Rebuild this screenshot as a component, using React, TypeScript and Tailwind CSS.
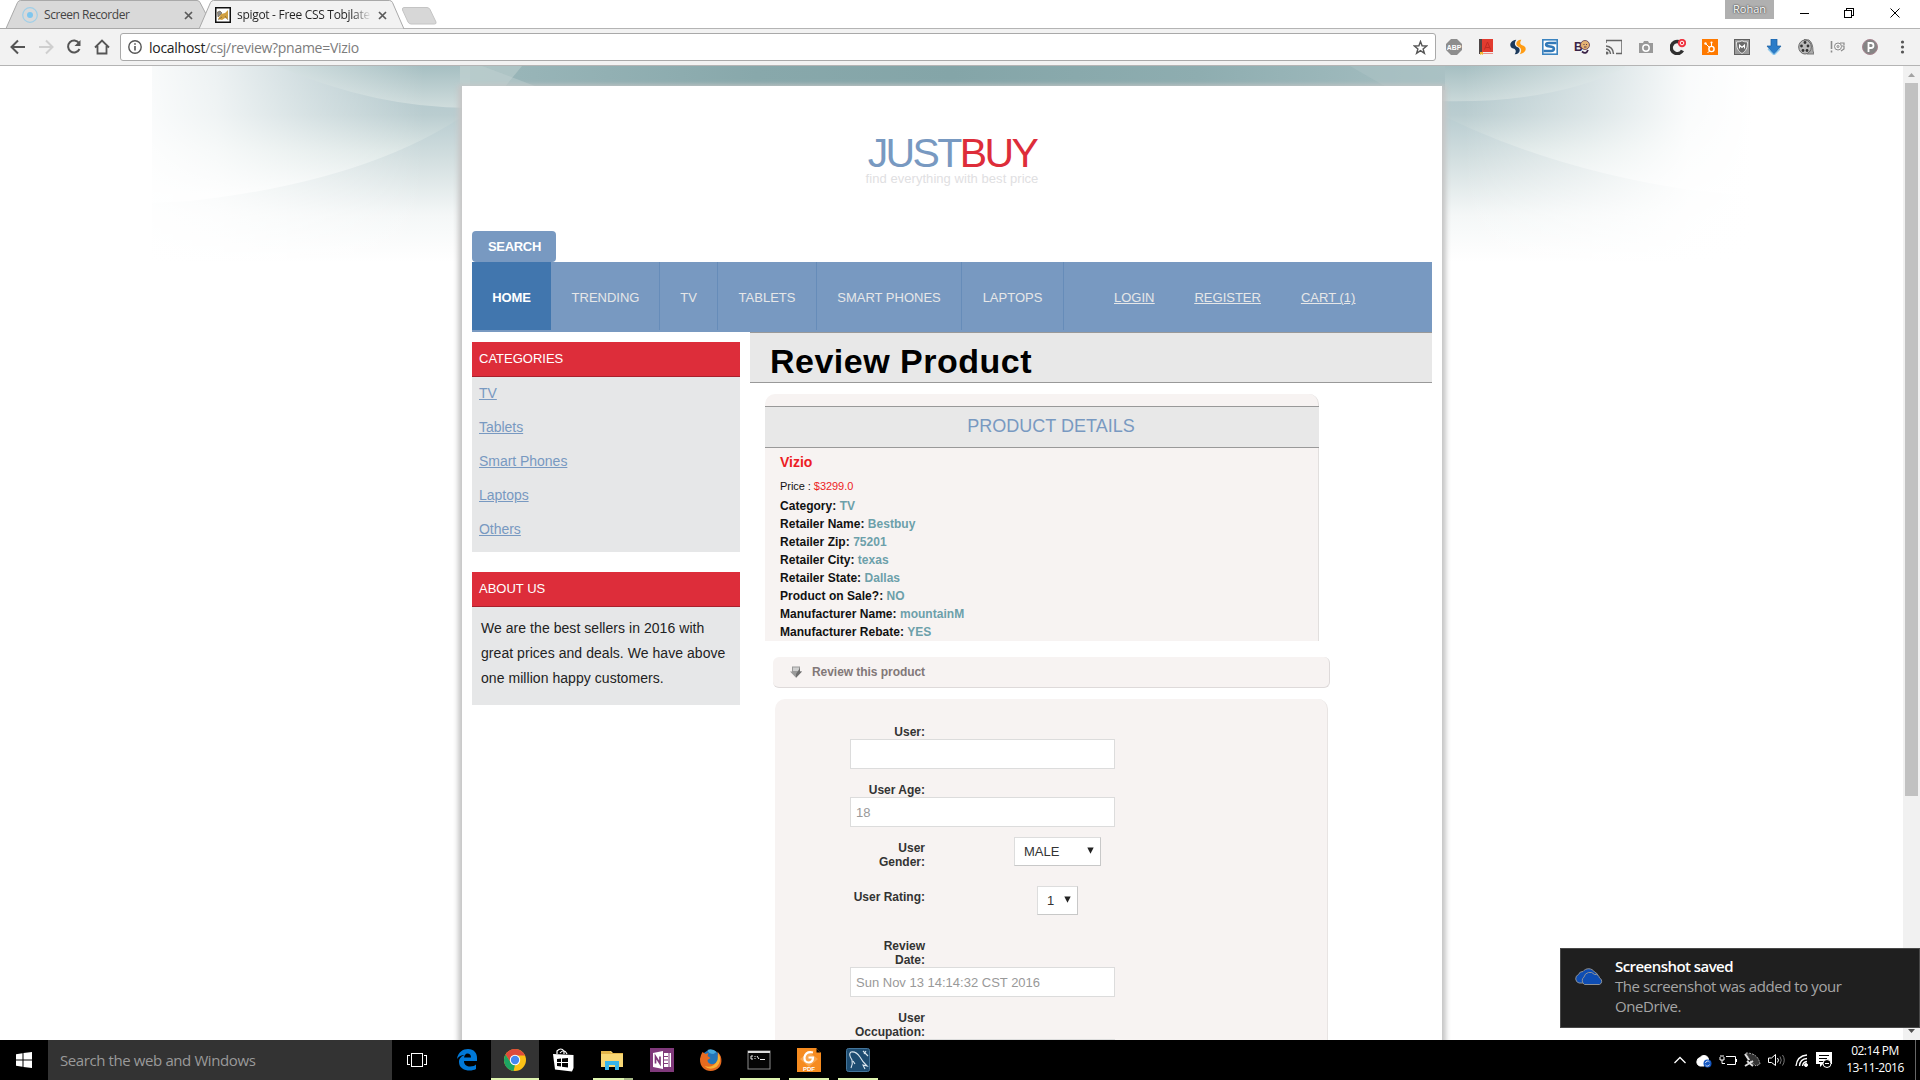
import React from "react";

const sans = "font-['Liberation_Sans',sans-serif]";
const ui = "font-['Open_Sans',sans-serif]";

function Tabs() {
  return (
    <div className={`relative flex h-7 w-full bg-white text-[12px] ${ui}`}>
      <svg className="absolute left-0 top-0" width="440" height="29" viewBox="0 0 440 29">
        <path d="M0 28.5H6L17.5 2.5Q18.5.5 20.500.5H197Q199 .5 200 2.500L206 14 200 28.500Z" fill="#d9d9d9" stroke="#a9a9a9" />
        <path d="M199 29L210.500 2.500Q211.500.5 213.500.5H389.500Q391.500.5 392.500 2.500L404 29Z" fill="#f2f2f2" stroke="#a9a9a9" />
        <path d="M404 7.500H427Q429 7.500 430 9.500L436 22Q436.500 24 434.500 24H411Q409 24 408 22L402.500 10Q402 7.500 404 7.500Z" fill="#d7d7d7" stroke="#c4c4c4" />
      </svg>
      <div className="relative flex h-7 w-[206px] items-center pl-[22px] pt-[2px]">
        <svg width="16" height="16" viewBox="0 0 16 16"><circle cx="8" cy="8" r="7.300" fill="none" stroke="#9fcfe8" strokeWidth="1.200" /><circle cx="8" cy="8" r="3" fill="#7fc6ee" /></svg>
        <span className="ml-[6px] w-[140px] tracking-[-0.45px] text-[#444]">Screen Recorder</span>
        <CloseX />
      </div>
      <div className="relative flex h-7 w-[200px] items-center pl-[9px] pt-[2px]">
        <svg width="16" height="16" viewBox="0 0 16 16">
          <rect x=".75" y=".75" width="14.500" height="14.500" fill="#fff" stroke="#111" strokeWidth="1.500" />
          <path d="M3 12L6 7 10 6 13 3V12L10 11 7 13Z" fill="#d1a041" /><path d="M2.500 5L5 4 7 6 5 8 3 10ZM10 9L13 13M3 13L7 10" fill="#8a8a8a" stroke="#6b5a3a" strokeWidth=".6" />
        </svg>
        <span className="ml-[6px] w-[134px] overflow-hidden whitespace-nowrap bg-gradient-to-r from-[#222] from-85% to-[#f2f2f2] bg-clip-text tracking-[-0.3px] text-transparent">spigot - Free CSS Tobjlate</span>
        <span className="ml-[7px] flex"><CloseX /></span>
      </div>
      <div className="flex-1" />
      <div className="mr-[26px] flex h-[19px] w-[49px] items-center justify-center bg-[#b0b0b0] text-[11px] text-white [text-shadow:0_0_2px_#333,0_0_1px_#555]">Rohan</div>
      <svg width="120" height="26" viewBox="0 0 120 26" fill="none" stroke="#000" shapeRendering="crispEdges">
        <path d="M0 13.500H9M44.500 10.500H51.500V17.500H44.500ZM46.500 10.500V8.500H53.500V15.500H51.500" />
        <path d="M90.500 8.500L99.500 17.500M99.500 8.500L90.500 17.500" shapeRendering="auto" />
      </svg>
    </div>
  );
}

function CloseX() {
  return <svg width="9" height="9" viewBox="0 0 9 9" stroke="#5a5a5a" strokeWidth="1.700"><path d="M1 1L8 8M8 1L1 8" /></svg>;
}

const extensions: React.ReactNode[] = [
  <g><path d="M5 0H11L16 5V11L11 16H5L0 11V5Z" fill="#8d8d8d" /><text x="8" y="10.800" textAnchor="middle" fontSize="6.800" fontWeight="bold" fill="#fff" fontFamily="Liberation Sans">ABP</text></g>,
  <g><rect x="1" y="0" width="14" height="15" fill="#e23b2f" /><rect x="1" width="3" height="15" fill="#4d4545" /><rect x="2" y="13" width="13" height="1.500" fill="#eee" /><path d="M2 13H5V16L3.500 15 2 16Z" fill="#f4b82e" /><path d="M6.500 10.500L9.500 3 12.500 10.500M7.500 8.500H11.500" fill="none" stroke="#c02a22" strokeWidth="1" /></g>,
  <g><path d="M7 .8C0 2 -.5 8 4 9.500C6.500 10 7.500 12 5.500 15.200C10.500 15.500 12.500 9.500 8 8C5.500 7 4.800 4 7 .8Z" fill="#1d3a5c" transform="translate(-.8 0)" /><path d="M9 15.200C16 14 16.500 8 12 6.500C9.500 6 8.500 4 10.500 .8C5.500 .5 3.500 6.500 8 8C10.500 9 11.200 12 9 15.200Z" fill="#ff9c14" transform="translate(.8 0)" /></g>,
  <g><rect x=".8" y=".8" width="14.400" height="14.400" fill="#fff" stroke="#3c84c0" strokeWidth="1.600" /><path d="M14.500 4H7C3 4 3.500 6.800 6.500 7.200L9.500 7.800C13 8.500 12.500 12 9 12H1.500" fill="none" stroke="#3279b8" strokeWidth="2.600" /></g>,
  <g><text x="0" y="12" fontSize="12" fontWeight="bold" fill="#3a2347" fontFamily="Liberation Sans">B</text><circle cx="11" cy="6" r="4.500" fill="#e5b272" stroke="#5a3550" strokeWidth=".8" /><path d="M9.500 5.500H10.500M12 5.500H13M10 8H12.500" stroke="#5a3550" /><path d="M8 12.500Q12 16 14 11" fill="none" stroke="#3a2347" strokeWidth="1.800" /></g>,
  <g fill="none" stroke="#666" strokeWidth="1.500"><path d="M0 4V1.500H16V14.500H10M0 7Q7 7.500 7.500 15M0 10Q4 10.500 4.500 15" /><circle cx="1" cy="14" r=".8" fill="#666" /></g>,
  <g><path d="M1 4H5L6 2H10L11 4H15V14H1Z" fill="#999" /><circle cx="8" cy="9" r="3.200" fill="none" stroke="#fff" strokeWidth="1.500" /></g>,
  <g><path d="M12.500 11.500A6 6 0 1 1 9 2.800" fill="none" stroke="#303030" strokeWidth="3.500" /><circle cx="12" cy="4" r="4.200" fill="#ef3340" /><circle cx="12" cy="4" r="1.800" fill="none" stroke="#fff" /></g>,
  <g><rect width="16" height="16" fill="#ff7a00" /><circle cx="9.500" cy="10" r="2.600" fill="none" stroke="#fff" strokeWidth="1.400" /><path d="M9.500 7.500V3.500M7.500 8.500L3.500 4.500M7.500 12L5.500 14" stroke="#fff" /><circle cx="3.500" cy="4.500" r="1.200" fill="#fff" /><circle cx="9.500" cy="3.500" r="1.100" fill="#fff" /></g>,
  <g><rect x=".5" y=".5" width="15" height="15" fill="#9a9a9a" stroke="#606060" /><path d="M2.500 3Q6 3 8 1.800 10 3 13.500 3C13.500 9 12 12 8 14.500 4 12 2.500 9 2.500 3Z" fill="#6b6b6b" stroke="#eee" strokeWidth=".9" /><path d="M5.500 9.500V6L8 8.500 10.500 6V9.500" fill="none" stroke="#fff" strokeWidth="1.100" /></g>,
  <g><path d="M5 0H11V7H15L8 15.500 1 7H5Z" fill="#2b7cc8" stroke="#185d9f" strokeWidth=".7" /><path d="M2 10L8 16 14 10" fill="none" stroke="#8bc8ee" strokeWidth="1.300" /></g>,
  <g><path d="M6 .5L11 1Q15 4 15 12L16 15H9" fill="#aaa" stroke="#777" /><ellipse cx="7" cy="8" rx="6.300" ry="7" fill="#bbb" stroke="#666" /><g fill="#333"><circle cx="7" cy="3.500" r="1.400" /><circle cx="3.500" cy="7" r="1.400" /><circle cx="10" cy="7" r="1.400" /><circle cx="5" cy="11.500" r="1.400" /><circle cx="9" cy="11.500" r="1.400" /></g></g>,
  <g fill="none" stroke="#8a8a8a"><path d="M1.500 2V10M1.500 11.500V13.500" strokeWidth="1.600" /><circle cx="8" cy="7.500" r="3.500" /><circle cx="8" cy="7.500" r="1" /><path d="M10 4H14V6M12 7H14V10L11 12" strokeWidth="1.200" /></g>,
  <g><circle cx="8" cy="8" r="7.500" fill="#858585" stroke="#a7848f" /><path d="M6.500 13V4H9Q11.500 4 11.500 6.500T9 9H6.500" fill="none" stroke="#fff" strokeWidth="1.800" /></g>,
];

function Toolbar() {
  return (
    <div className="flex h-[38px] w-full items-center border-y border-[#b4b4b4] bg-[#f2f2f2]">
      <svg className="relative" width="120" height="36" viewBox="0 0 120 36" fill="none" stroke="#555" strokeWidth="2">
        <path d="M25 18H12M18 11.500L11.500 18 18 24.500" />
        <path d="M39 18H52M46 11.500L52.500 18 46 24.500" stroke="#cfcfcf" />
        <path d="M79 14A6 6 0 1 0 79.500 20" />
        <path d="M80.500 11V17H74.500Z" fill="#555" stroke="none" />
        <path d="M95 18.500L102 11.500 109 18.500M97.500 17V24.500H106.500V17" strokeWidth="1.800" />
      </svg>
      <div className="flex h-7 w-[1316px] items-center rounded-[3px] border border-[#a9a9a9] bg-white pl-[7px] pr-[7px]">
        <svg width="14" height="14" viewBox="0 0 14 14" fill="none" stroke="#555" strokeWidth="1.400"><circle cx="7" cy="7" r="6.200" /><path d="M7 6V10.500M7 3.300V4.800" strokeWidth="1.600" /></svg>
        <span className={`ml-[7px] flex-1 text-[14px] tracking-[-0.28px] text-[#7c7c7c] ${ui}`}><span className="text-[#222]">localhost</span>/csj/review?pname=Vizio</span>
        <svg width="15" height="15" viewBox="0 0 15 15" fill="none" stroke="#555" strokeWidth="1.400"><path d="M7.500 1.500L9.100 5.800 13.700 6 10.100 8.900 11.400 13.300 7.500 10.700 3.600 13.300 4.900 8.900 1.300 6 5.900 5.800Z" /></svg>
      </div>
      <div className="ml-[2px] flex">
        {extensions.map((icon, i) => (
          <div key={i} className="flex w-8 justify-center"><svg width="16" height="16" viewBox="0 0 16 16">{icon}</svg></div>
        ))}
      </div>
      <svg className="ml-[14px]" width="5" height="14" viewBox="0 0 5 14" fill="#555"><circle cx="2.500" cy="2" r="1.600" /><circle cx="2.500" cy="7" r="1.600" /><circle cx="2.500" cy="12" r="1.600" /></svg>
    </div>
  );
}

function Waves() {
  return (
    <svg className="absolute left-[152px] top-0" width="1600" height="230" viewBox="152 66 1600 230">
      <defs>
        <linearGradient id="low" x1="0" y1="105" x2="0" y2="262" gradientUnits="userSpaceOnUse"><stop offset="0" stopColor="#b2c8cd" /><stop offset=".35" stopColor="#d3dfe0" /><stop offset=".7" stopColor="#f4f7f7" /><stop offset="1" stopColor="#fff" /></linearGradient>
        <linearGradient id="mid" x1="0" y1="66" x2="0" y2="195" gradientUnits="userSpaceOnUse"><stop offset="0" stopColor="#adc3c8" /><stop offset=".38" stopColor="#bacdd0" /><stop offset=".65" stopColor="#dae5e4" /><stop offset="1" stopColor="#f9fbfb" /></linearGradient>
        <linearGradient id="top" x1="0" y1="66" x2="0" y2="108" gradientUnits="userSpaceOnUse"><stop offset="0" stopColor="#a6bfc2" /><stop offset="1" stopColor="#d0dddd" /></linearGradient>
        <linearGradient id="band" x1="460" y1="0" x2="1445" y2="0" gradientUnits="userSpaceOnUse"><stop offset="0" stopColor="#9cb8bb" /><stop offset=".3" stopColor="#88a8ab" /><stop offset=".5" stopColor="#84a5a8" /><stop offset=".75" stopColor="#8eadb0" /><stop offset="1" stopColor="#a6bfc2" /></linearGradient>
        <linearGradient id="fade" x1="152" y1="0" x2="1752" y2="0" gradientUnits="userSpaceOnUse">
          <stop offset="0" stopColor="#fff" stopOpacity=".92" /><stop offset=".04" stopColor="#fff" stopOpacity=".78" /><stop offset=".1" stopColor="#fff" stopOpacity=".4" /><stop offset=".17" stopColor="#fff" stopOpacity="0" />
          <stop offset=".82" stopColor="#fff" stopOpacity="0" /><stop offset=".9" stopColor="#fff" stopOpacity=".5" /><stop offset=".96" stopColor="#fff" stopOpacity=".93" /><stop offset="1" stopColor="#fff" />
        </linearGradient>
      </defs>
      <rect x="152" y="66" width="1600" height="230" fill="url(#low)" />
      <path d="M152 66H480V104Q380 180 190 201L152 203Z" fill="url(#mid)" />
      <path d="M1752 66H1420V104Q1540 168 1690 190L1752 196Z" fill="url(#mid)" />
      <path d="M277 66Q375 108 470 108V66Z" fill="url(#top)" />
      <path d="M1625 68Q1550 104 1440 101V66H1625Z" fill="url(#top)" />
      <path d="M470 66H1445V90H470Z" fill="url(#band)" />
      <path d="M460 66H522L504 88H460Z" fill="#b7cacb" opacity=".7" />
      <path d="M482 66L540 88H460V66Z" fill="#c3d2d2" opacity=".45" />
      <path d="M1350 66H1445V88H1388Z" fill="#adc3c6" opacity=".5" />
      <rect x="152" y="66" width="1600" height="230" fill="url(#fade)" />
    </svg>
  );
}

function Nav() {
  const items = [["TRENDING", "w-[109px] pl-px"], ["TV", "w-[58px]"], ["TABLETS", "w-[99px]"], ["SMART PHONES", "w-[145px]"], ["LAPTOPS", "w-[102px]"]];
  return (
    <nav className="flex h-[70px] bg-[#7899c1] text-[13px] text-[#e6e7e8]">
      <a className="flex h-[68px] w-[79px] items-center justify-center bg-[#4176ae] pt-[4px] font-bold tracking-[-0.1px] text-white">HOME</a>
      {items.map(([t, w]) => (
        <a key={t} className={`flex h-[68px] items-center justify-center border-r border-[#668cb9] pt-[4px] whitespace-nowrap ${w}`}>{t}</a>
      ))}
      <div className="ml-[50px] flex h-[68px] items-center gap-10 pt-[4px] underline">
        <a>LOGIN</a><a>REGISTER</a><a>CART (1)</a>
      </div>
    </nav>
  );
}

function Sidebar() {
  return (
    <aside className="w-[268px] pt-[10px]">
      <h2 className="h-[35px] border-b border-[#a8202c] bg-[#dd2d3a] pl-[7px] text-[13px] leading-[33px] text-white">CATEGORIES</h2>
      <ul className="bg-[#e6e7e8] pb-[6px] pl-[7px] text-[14px] leading-[34px] tracking-[-0.03px] text-[#7899c1] underline">
        {["TV", "Tablets", "Smart Phones", "Laptops", "Others"].map((c, i) => <li key={c} className={i === 0 ? "h-[33px] leading-[32px]" : "h-[34px]"}>{c}</li>)}
      </ul>
      <h2 className="mt-5 h-[35px] border-b border-[#a8202c] bg-[#dd2d3a] pl-[7px] text-[13px] leading-[33px] text-white">ABOUT US</h2>
      <p className="h-[98px] bg-[#e6e7e8] pl-[9px] pt-[9px] text-[14px] leading-[25px] tracking-[0.05px] text-[#222]">
        We are the best sellers in 2016 with<br />great prices and deals. We have above<br />one million happy customers.
      </p>
    </aside>
  );
}

const details = [
  ["Category:", "TV"], ["Retailer Name:", "Bestbuy"], ["Retailer Zip:", "75201"], ["Retailer City:", "texas"],
  ["Retailer State:", "Dallas"], ["Product on Sale?:", "NO"], ["Manufacturer Name:", "mountainM"], ["Manufacturer Rebate:", "YES"],
];

function Details() {
  return (
    <section className="ml-[15px] mt-[11px] h-[247px] w-[554px] rounded-t-[10px] border-r border-[#e2dfde] bg-[#f7f3f2] pt-3">
      <h2 className="-mr-px h-[42px] border-y border-[#999] bg-[#e8e8e8] pl-[26px] pr-[8px] text-center text-[18px] leading-[39px] text-[#7899c1]">PRODUCT DETAILS</h2>
      <div className="pl-[15px] text-[12px] font-bold leading-[18px] text-[#111]">
        <p className="h-7 text-[14px] leading-7 text-[#ed1c24]">Vizio</p>
        <p className="h-[21px] text-[11px] font-normal leading-[21px] tracking-[-0.05px]">Price : <span className="text-[#ed1c24]">$3299.0</span></p>
        {details.map(([k, v]) => <p key={k} className="tracking-[0.03px]">{k} <span className="text-[#6ca0aa]">{v}</span></p>)}
      </div>
    </section>
  );
}

function Select({ value, box }: { value: string; box: string }) {
  return (
    <div className={`flex h-[29px] items-center justify-between border border-b-[#c8c8c8] border-l-[#ddd] border-r-[#c8c8c8] border-t-[#ddd] bg-white pl-[9px] pr-[6px] text-[13px] font-normal ${box}`}>
      {value}<svg className="-mt-[2px]" width="7" height="7" viewBox="0 0 7 7"><path d="M.3.5H6.700L3.500 6.800Z" fill="#222" /></svg>
    </div>
  );
}

const label = "w-[75px] text-right leading-[14px]";
const input = "mb-[14px] h-[30px] w-[265px] border border-[#dcdcdc] bg-white pl-[5px] text-[13px] font-normal leading-[29px] text-[#999]";

function ReviewForm() {
  return (
    <>
      <div className="ml-[23px] mt-4 flex h-[31px] w-[557px] items-center rounded-[6px] border-b border-r border-[#dedada] bg-[#f7f3f2] pl-[17px] text-[12px] font-bold text-[#827878]">
        <svg width="12" height="12" viewBox="0 0 12 12"><path d="M2 .5H10V5.500H12L6 11.800 0 5.500H2Z" fill="#9a9a9a" /><path d="M3 1.500H9V5H3Z" fill="#cfcfcf" /><path d="M10 2V5.500H12L6 11.800V8Z" fill="#6e6e6e" /></svg>
        <span className="ml-[10px] tracking-[-0.05px]">Review this product</span>
      </div>
      <form className="ml-[25px] mt-[11px] h-[341px] w-[553px] rounded-t-[10px] border-r border-[#e8e4e3] bg-[#f7f3f2] pl-[75px] pt-[26px] text-[12px] font-bold text-[#333]">
        <div className={label}>User:</div>
        <div className={input} />
        <div className={label}>User Age:</div>
        <div className="mb-[10px] h-[30px] w-[265px] border border-[#dcdcdc] bg-white pl-[5px] text-[13px] font-normal leading-[29px] text-[#999]">18</div>
        <div className="flex h-[49px]"><div className={`${label} pt-1`}>User<br />Gender:</div><Select value="MALE" box="ml-[89px] w-[87px]" /></div>
        <div className="flex h-[53px]"><div className={`${label} pt-1`}>User Rating:</div><Select value="1" box="ml-[112px] w-[41px]" /></div>
        <div className={label}>Review<br />Date:</div>
        <div className={input}>Sun Nov 13 14:14:32 CST 2016</div>
        <div className={label}>User<br />Occupation:</div>
        <div className={input} />
      </form>
    </>
  );
}

function Scrollbar() {
  return (
    <div className="flex h-full w-[17px] flex-col items-center bg-[#f1f1f1]">
      <svg width="17" height="17" viewBox="0 0 17 17"><path d="M5 11L8.500 7 12 11Z" fill="#a3a3a3" /></svg>
      <div className="h-[713px] w-[13px] bg-[#c1c1c1]" />
      <div className="flex-1" />
      <svg width="17" height="17" viewBox="0 0 17 17"><path d="M5 6L8.500 10 12 6Z" fill="#505050" /></svg>
    </div>
  );
}

function Toast() {
  return (
    <div className={`absolute left-[1560px] top-[948px] flex h-20 w-[360px] border border-[#484848] bg-[#1f1f1f] pl-[13px] pt-[7px] ${ui}`}>
      <svg className="mt-[10px]" width="30" height="20" viewBox="0 0 30 20" fill="#0e4db3" stroke="#8d9196">
        <path d="M8 17H5A4.500 4.500 0 0 1 4.500 8.500 4.500 4.500 0 0 1 9 5.500 7 7 0 0 1 20.500 6 5 5 0 0 1 24 11L18 17Z" />
        <path d="M10.500 18.500A4.500 4.500 0 0 1 10 11 6 6 0 0 1 20.500 8.500 4.500 4.500 0 0 1 25.500 12 3.500 3.500 0 0 1 25.500 18.500Z" />
      </svg>
      <div className="ml-[11px] w-[260px] text-[15px] leading-5 text-[#a5a5a5]">
        <p className="font-semibold tracking-[-0.55px] text-white">Screenshot saved</p>
        <p className="whitespace-nowrap tracking-[-0.43px]">The screenshot was added to your<br />OneDrive.</p>
      </div>
    </div>
  );
}

const apps: [string, string, React.ReactNode][] = [
  ["edge", "w-[49px]", <path d="M1 11C2 4 7 1 12 1C18 1 21 5 21 10V13H8C8 17 11 18.500 14 18.500C17 18.500 19 17.500 20 16.500V21C15 24 3 23 3 14C3 10 6 8 8.500 7C5 7 3 8.500 1 11ZM8 9.500H15C15 7 13.500 5.500 11.500 5.500C9.500 5.500 8.500 7.500 8 9.500Z" fill="#0078d7" />],
  ["chrome", "w-12 bg-[#333]", <g><circle cx="11" cy="12" r="11" fill="#fbc116" /><path d="M1.500 6.500A11 11 0 0 1 20.500 6.500L21 7.500H11L6.500 14.500Z" fill="#de4b3c" /><path d="M1.500 6.500L7 15 11 17 9.500 23A11 11 0 0 1 1.500 6.500Z" fill="#1da462" /><circle cx="11" cy="12" r="5.200" fill="#fff" /><circle cx="11" cy="12" r="4.200" fill="#4688f1" /></g>],
  ["store", "w-[49px]", <g transform="translate(-1 1)"><path d="M1 5L21.500 6V19L20 22.500 3 20.500Z" fill="#fff" /><path d="M5 5V2Q9-2 12 2V5M8 4Q12-1 15 5" fill="none" stroke="#fff" strokeWidth="1.200" /><path d="M5 10L9 9.500V13H5ZM10 9.500L16 9V13H10ZM5 14H9V17.500L5 17ZM10 14H16V18.500L10 17.700Z" fill="#000" /></g>],
  ["explorer", "w-[50px]", <g transform="translate(-1 1)"><path d="M0 2H10L12 4H22V18H0Z" fill="#f8d775" /><path d="M0 2H9L10 4H22V5H0Z" fill="#e3b54a" /><path d="M4 12H18V21H14V16H8V21H4Z" fill="#36b5ec" /></g>],
  ["onenote", "w-[49px]", <g transform="translate(-1 1)"><rect x="-1" y="-1" width="24" height="24" fill="#80397b" /><path d="M2 4L12 2V20L2 18ZM13 4H20V18H13Z" fill="#fff" /><path d="M4.500 14.500V7.500L9 14.500V7.500" fill="none" stroke="#80397b" strokeWidth="1.700" /><path d="M13 7.500H17M13 11H17M13 14.500H17M18 4V18" stroke="#80397b" /></g>],
  ["firefox", "w-[49px]", <g transform="translate(-1.500 1)"><circle cx="11.500" cy="11" r="10" fill="#2375b8" /><path d="M8 1Q13-1 17 3L14 5Q9 5 8 1Z" fill="#46a9dd" /><path d="M3 3L6 5 9 4 8 7 11 9 8 11C8 16 15 17 19 11L18 7C19 4 18 3 17 2C23 6 23 14 20 18C14 25 0 23 .5 10Q1 6 3 3Z" fill="#e66a1f" /><path d="M19 4Q23 12 17 18 10 22 5 17 14 20 18 11Z" fill="#fbb133" /></g>],
  ["cmd", "w-12", <g transform="translate(-1 0)"><rect x="0" y="3" width="22" height="18" fill="#050505" stroke="#8b8b8b" /><path d="M0 4H22" stroke="#ddd" strokeWidth="2" /><path d="M5 8H3V11H5M7 8V9M7 10V11M9 8L11 11M12 11.500H17" fill="none" stroke="#eee" /></g>],
  ["pdf", "w-[49px]", <g transform="translate(0 1)"><path d="M-1-1H18L23 4V23H-1Z" fill="#f68b1f" /><path d="M18-1V4H23" fill="#000" stroke="#f68b1f" /><path d="M11 3L20 10 11 18 2 10Z" fill="#f9a64e" /><path d="M15 3.500Q8 2 6.500 8 6 13.500 11 13.500 15 13 15 8.500H10.500" fill="none" stroke="#fff" strokeWidth="2.200" /><text x="11" y="21.500" textAnchor="middle" fontSize="6" fontWeight="bold" fill="#fff" fontFamily="Liberation Sans">PDF</text></g>],
  ["mysql", "w-[50px]", <g transform="translate(0 1)"><rect x="-.5" y="-.5" width="23" height="23" rx="2" fill="#1d4c71" stroke="#44759a" /><path d="M4 19Q6 15 5 11 1 5 4 3 9 2 13 8 15 12 20 17L16 16 18 20M6 12L8 15M16 2L21 7M17 5L19 2" fill="none" stroke="#dce8f0" strokeWidth="1.100" /></g>],
];

function Taskbar() {
  return (
    <div className={`flex h-10 w-full bg-black ${ui}`}>
      <div className="flex w-12 items-center justify-center"><svg width="16" height="16" viewBox="0 0 16 16" fill="#fff"><path d="M0 2.300L6.500 1.300V7.500H0ZM7.500 1.100L16 0V7.500H7.500ZM0 8.500H6.500V14.700L0 13.700ZM7.500 8.500H16V16L7.500 14.900Z" /></svg></div>
      <div className="flex w-[344px] items-center bg-[#333] pl-3 text-[15px] tracking-[-0.4px] text-[#9a9a9a]">Search the web and Windows</div>
      <div className="flex w-[49px] items-center justify-center"><svg width="22" height="14" viewBox="0 0 22 14" fill="none" stroke="#fff" shapeRendering="crispEdges"><path d="M5.500.5H16.500V13.500H5.500ZM4 2.500H1.500V11.500H4M18 2.500H20.500V11.500H18" /></svg></div>
      <div className="w-px" />
      {apps.map(([name, w, art]) => (
        <div key={name} className={`flex h-10 flex-col items-center ${w}`}>
          <svg className="mt-2 overflow-visible" width="22" height="24" viewBox="0 0 22 24">{art}</svg>
          <div className="flex-1" />
          {name === "chrome" && <div className="h-[2px] w-12 bg-[#dff5b0]" />}
          {["cmd", "pdf", "mysql"].includes(name) && <div className="h-[2px] w-10 bg-[#dff5b0]" />}
          {name === "explorer" && <div className="flex h-[2px] w-10 bg-[#a9bb88]"><i className="w-[31px] bg-[#dff5b0]" /></div>}
        </div>
      ))}
      <div className="flex-1" />
      <svg width="160" height="40" viewBox="-2 0 160 40" fill="none" stroke="#fff">
        <path d="M.5 23L6 17.500 11.500 23" strokeWidth="1.300" />
        <path d="M26 26A4 4 0 0 1 23 21 4 4 0 0 1 26 17.500 5 5 0 0 1 34 17.500L35 22 30 26Z" fill="#fff" />
        <circle cx="33.500" cy="23.500" r="4" fill="#1557c0" stroke="none" /><path d="M31.500 23A2.200 2.200 0 0 1 35.500 22M35.500 24.500A2.200 2.200 0 0 1 31.500 25" strokeWidth=".8" />
        <path d="M52 16.500H61.500V24.500H53M62.500 19V22M46 17V20H50V17M47 15V17M49 15V17M48 20V23.500H51" />
        <path d="M72 13Q84 13 86 24L82 26 76 21Z" fill="#333" stroke="#aaa" strokeDasharray="2 1" /><path d="M71 14L75 20M71 26L79 21M73 21L79 26" stroke="#ddd" strokeWidth="2" />
        <path d="M94.500 18H97.500L101.500 14.500V25.500L97.500 22.500H94.500Z" /><path d="M103.500 18Q105.500 20 103.500 22.500" /><path d="M106 16.500Q108.500 20 106 24M108.500 15Q112 20 108.500 25.500" stroke="#777" />
        <path d="M122 26Q123 16 133 15M125.500 26Q126 19 133 18.500M128.500 26Q129 22 133 21.500" strokeWidth="1.300" /><circle cx="132" cy="25" r="1.500" fill="#fff" />
        <path d="M142 12H158V24H149L146 27V24H142Z" fill="#fff" stroke="none" /><path d="M145 15.500H155M145 18.500H153M145 21.500H150" stroke="#000" /><circle cx="153" cy="23.500" r="4" fill="#000" /><path d="M151 23.500H155" />
      </svg>
      <div className="ml-3 flex w-[62px] flex-col items-center pt-[2px] text-[12px] leading-[17px] tracking-[-0.5px] whitespace-nowrap text-white"><span>02:14 PM</span><span>13-11-2016</span></div>
      <div className="ml-[9px] w-[5px] border-l border-[#666]" />
    </div>
  );
}

export default function App() {
  return (
    <div className="relative flex h-[1080px] w-[1920px] flex-col overflow-hidden bg-white">
      <Tabs />
      <Toolbar />
      <div className={`relative flex h-[974px] w-full overflow-hidden ${sans}`}>
        <Waves />
        <main className="relative ml-[462px] mt-5 h-[1000px] w-[980px] bg-white pl-[10px] pt-[50px] shadow-[0_3px_5px_4px_#c6c6c6]">
          <header className="w-[960px] text-center">
            <h1 className="text-[41px] leading-[34px] tracking-[-2.6px] text-[#7899c1]">JUST<span className="text-[#dd2d3a]">BUY</span></h1>
            <p className="text-[13px] leading-[17px] tracking-[0.05px] text-[#dfe0e2]">find everything with best price</p>
          </header>
          <div className="mt-11 h-[31px] w-[84px] rounded-[4px] bg-[#7899c1] pl-px text-center text-[13px] font-bold leading-[31px] tracking-[-0.3px] text-white">SEARCH</div>
          <div className="w-[960px]">
            <Nav />
            <div className="flex gap-[10px]">
              <Sidebar />
              <div className="w-[682px]">
                <h1 className="h-[51px] border-y border-[#999] bg-[#e8e8e8] pl-[20px] pt-[2px] text-[34px] font-bold leading-[52px] tracking-[0.5px] text-black">Review Product</h1>
                <Details />
                <ReviewForm />
              </div>
            </div>
          </div>
        </main>
        <div className="flex-1" />
        <Scrollbar />
      </div>
      <Taskbar />
      <Toast />
    </div>
  );
}
